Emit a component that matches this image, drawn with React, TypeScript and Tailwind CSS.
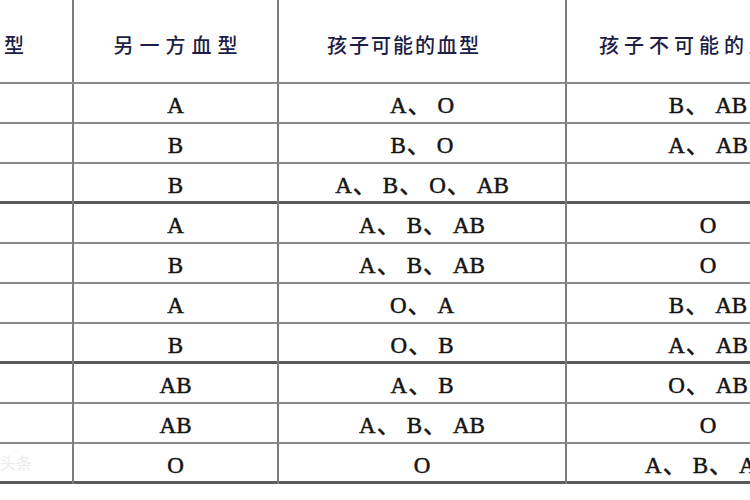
import React from 'react';

const rows: { a: string; b: string[]; c: string[]; thick?: boolean }[] = [
  { a: 'A', b: ['A', 'O'], c: ['B', 'AB'] },
  { a: 'B', b: ['B', 'O'], c: ['A', 'AB'] },
  { a: 'B', b: ['A', 'B', 'O', 'AB'], c: [], thick: true },
  { a: 'A', b: ['A', 'B', 'AB'], c: ['O'] },
  { a: 'B', b: ['A', 'B', 'AB'], c: ['O'] },
  { a: 'A', b: ['O', 'A'], c: ['B', 'AB'] },
  { a: 'B', b: ['O', 'B'], c: ['A', 'AB'], thick: true },
  { a: 'AB', b: ['A', 'B'], c: ['O', 'AB'] },
  { a: 'AB', b: ['A', 'B', 'AB'], c: ['O'] },
  { a: 'O', b: ['O'], c: ['A', 'B', 'AB'], thick: true },
];

function List({ items }: { items: string[] }) {
  return (
    <span>
      {items.map((it, i) => (
        <React.Fragment key={i}>
          {i > 0 && <span className="pl-[1px] pr-[7px]">、</span>}
          {it}
        </React.Fragment>
      ))}
    </span>
  );
}

const cols = 'grid grid-cols-[186px_205px_288px_282px]';
const cell = 'flex items-center justify-center border-r-2 border-[#7c7c7c]';

export default function App() {
  return (
    <div className="w-[750px] h-[500px] overflow-hidden bg-white">
      <div className="ml-[-112px] w-[961px] font-['Liberation_Serif','Noto_Sans_CJK_SC',serif] text-[23px] text-[#141414] [-webkit-text-stroke:0.5px_#141414]">
        <div
          className={`${cols} h-[84px] border-b-2 border-[#8a8a8a] font-['Noto_Sans_CJK_SC',sans-serif] text-[20px] text-[#1d1d45] font-medium [-webkit-text-stroke:0px]`}
        >
          <div className={`${cell} pt-[8px] pr-[4px] tracking-[6px]`}>一方血型</div>
          <div className={`${cell} pt-[8px] tracking-[6px] pl-[6px]`}>另一方血型</div>
          <div className={`${cell} pt-[8px] pr-[36px] tracking-[2px]`}>孩子可能的血型</div>
          <div className="flex items-center justify-center pt-[8px] pr-[18px] tracking-[5px]">孩子不可能的血型</div>
        </div>
        {rows.map((r, i) => (
          <div
            key={i}
            className={`${cols} ${
              r.thick ? 'h-[40px] border-b-[3px] border-[#5a5a5a]' : 'h-[40px] border-b-2 border-[#8a8a8a]'
            }`}
          >
            <div className={`${cell} relative`}>
              {i === 9 && (
                <span className="absolute left-[112px] top-[6px] font-['Noto_Sans_CJK_SC',sans-serif] text-[16px] text-[#ececec] [-webkit-text-stroke:0px]">
                  头条
                </span>
              )}
            </div>
            <div className={`${cell} pt-[5px]`}>{r.a}</div>
            <div className={`${cell} pt-[5px]`}>
              <List items={r.b} />
            </div>
            <div className="flex items-center justify-center pt-[5px]">
              <List items={r.c} />
            </div>
          </div>
        ))}
      </div>
    </div>
  );
}
